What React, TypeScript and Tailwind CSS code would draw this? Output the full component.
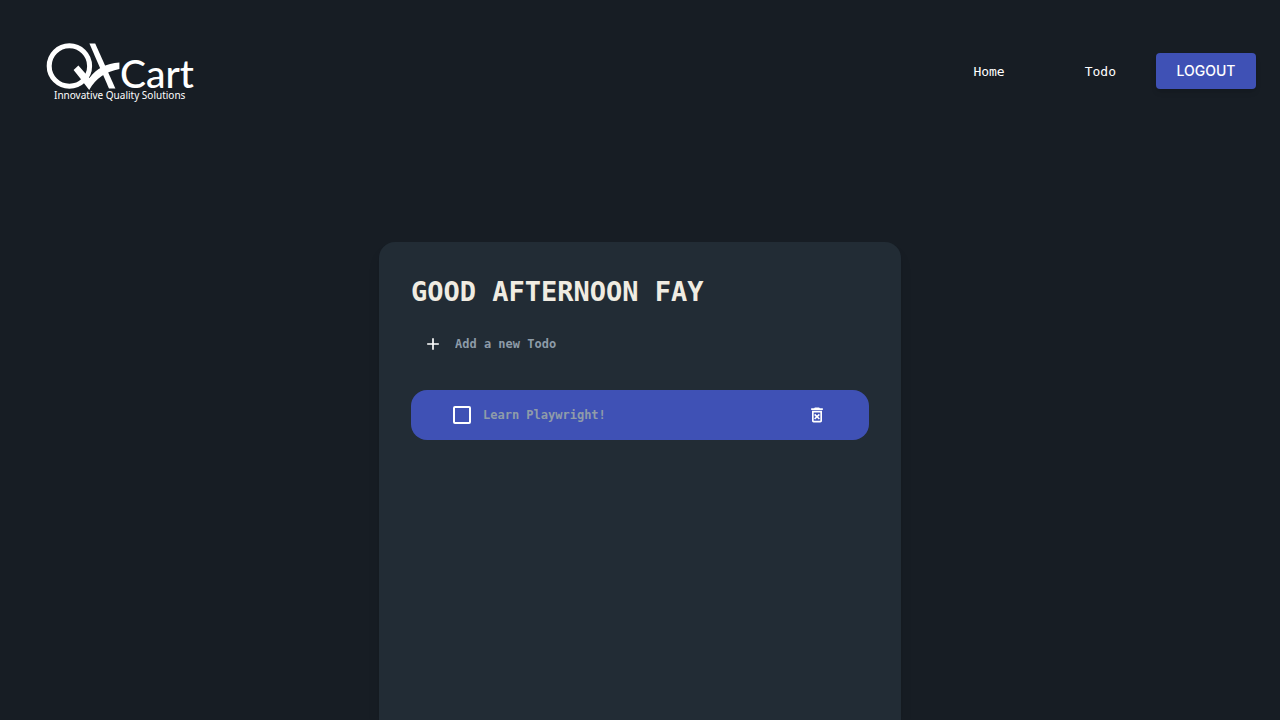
import { useState } from "react";
import { MdAdd, MdOutlineDeleteForever } from "react-icons/md";

function Logo() {
  return (
    <svg width="152" height="66" viewBox="0 0 152 66" role="img" aria-label="QkCart, Innovative Quality Solutions">
      <circle cx="25.4" cy="28" r="20.2" fill="none" stroke="#fff" strokeWidth="5" />
      <path d="M45.4 5.5 L51.2 5.5 L71.4 50.5 L65 50.5 Z" fill="#fff" />
      <path
        d="M29.6 32 L34.4 27.4 L45.4 40 C53 30.5 62 25.5 75.4 24.6 L75.4 31 C62 33.5 52 40 45.2 52 L36 40 Z"
        fill="#fff"
      />
      <text x="76" y="50" fill="#fff" fontSize="39" className="font-['Lato',sans-serif] font-medium">
        Cart
      </text>
      <text x="10" y="61" fill="#fff" fontSize="10" className="font-['Noto_Sans',sans-serif]">
        Innovative Quality Solutions
      </text>
    </svg>
  );
}

export default function App() {
  const [todos, setTodos] = useState([{ id: 1, text: "Learn Playwright!", done: false }]);
  const [draft, setDraft] = useState("");

  const addTodo = (event: React.FormEvent) => {
    event.preventDefault();
    if (!draft.trim()) return;
    setTodos([...todos, { id: Date.now(), text: draft, done: false }]);
    setDraft("");
  };

  return (
    <div className="flex min-h-screen flex-col bg-[#171d24] font-['DejaVu_Sans_Mono',monospace]">
      <header className="flex h-[142px] items-center justify-between pr-6 pl-11">
        <a href="#">
          <Logo />
        </a>
        <nav className="flex items-center text-[13px] text-white">
          <a href="#home" className="px-10 pt-0.5">
            Home
          </a>
          <a href="#todo" className="px-10 pt-0.5">
            Todo
          </a>
          <button
            type="button"
            className="h-9 w-[100px] rounded bg-[#3f51b5] font-['Inter',sans-serif] text-sm font-medium text-white shadow-md"
          >
            LOGOUT
          </button>
        </nav>
      </header>

      <main className="mt-[100px] flex w-full flex-1 justify-center px-4">
        <section className="w-full max-w-[522px] rounded-t-2xl bg-[#222c35] px-8 pt-8 pb-8 shadow-lg">
          <h1 className="text-[27px] leading-9 font-bold text-[#f0ece2]">GOOD AFTERNOON FAY</h1>
          <form onSubmit={addTodo} className="mt-4 flex h-9 items-center gap-3 px-3">
            <button type="submit" aria-label="Add todo" className="text-white">
              <MdAdd size={20} />
            </button>
            <input
              value={draft}
              onChange={(event) => setDraft(event.target.value)}
              placeholder="Add a new Todo"
              aria-label="Add a new Todo"
              className="min-w-0 flex-1 bg-transparent text-xs font-bold text-white outline-none placeholder:text-[#8d9ba8]"
            />
          </form>
          <ul className="mt-7 flex flex-col gap-4">
            {todos.map((todo) => (
              <li key={todo.id} className="flex h-[50px] items-center rounded-2xl bg-[#3f51b5] px-[42px]">
                <input
                  id={`todo-${todo.id}`}
                  type="checkbox"
                  checked={todo.done}
                  onChange={() => setTodos(todos.map((t) => (t.id === todo.id ? { ...t, done: !t.done } : t)))}
                  className="size-[18px] appearance-none rounded-xs border-2 border-white checked:bg-white"
                />
                <label htmlFor={`todo-${todo.id}`} className="ml-3 flex-1 text-xs font-bold text-[#8f9ca9]">
                  {todo.text}
                </label>
                <button
                  type="button"
                  aria-label={`Delete ${todo.text}`}
                  onClick={() => setTodos(todos.filter((t) => t.id !== todo.id))}
                  className="text-white"
                >
                  <MdOutlineDeleteForever size={20} />
                </button>
              </li>
            ))}
          </ul>
        </section>
      </main>
    </div>
  );
}
